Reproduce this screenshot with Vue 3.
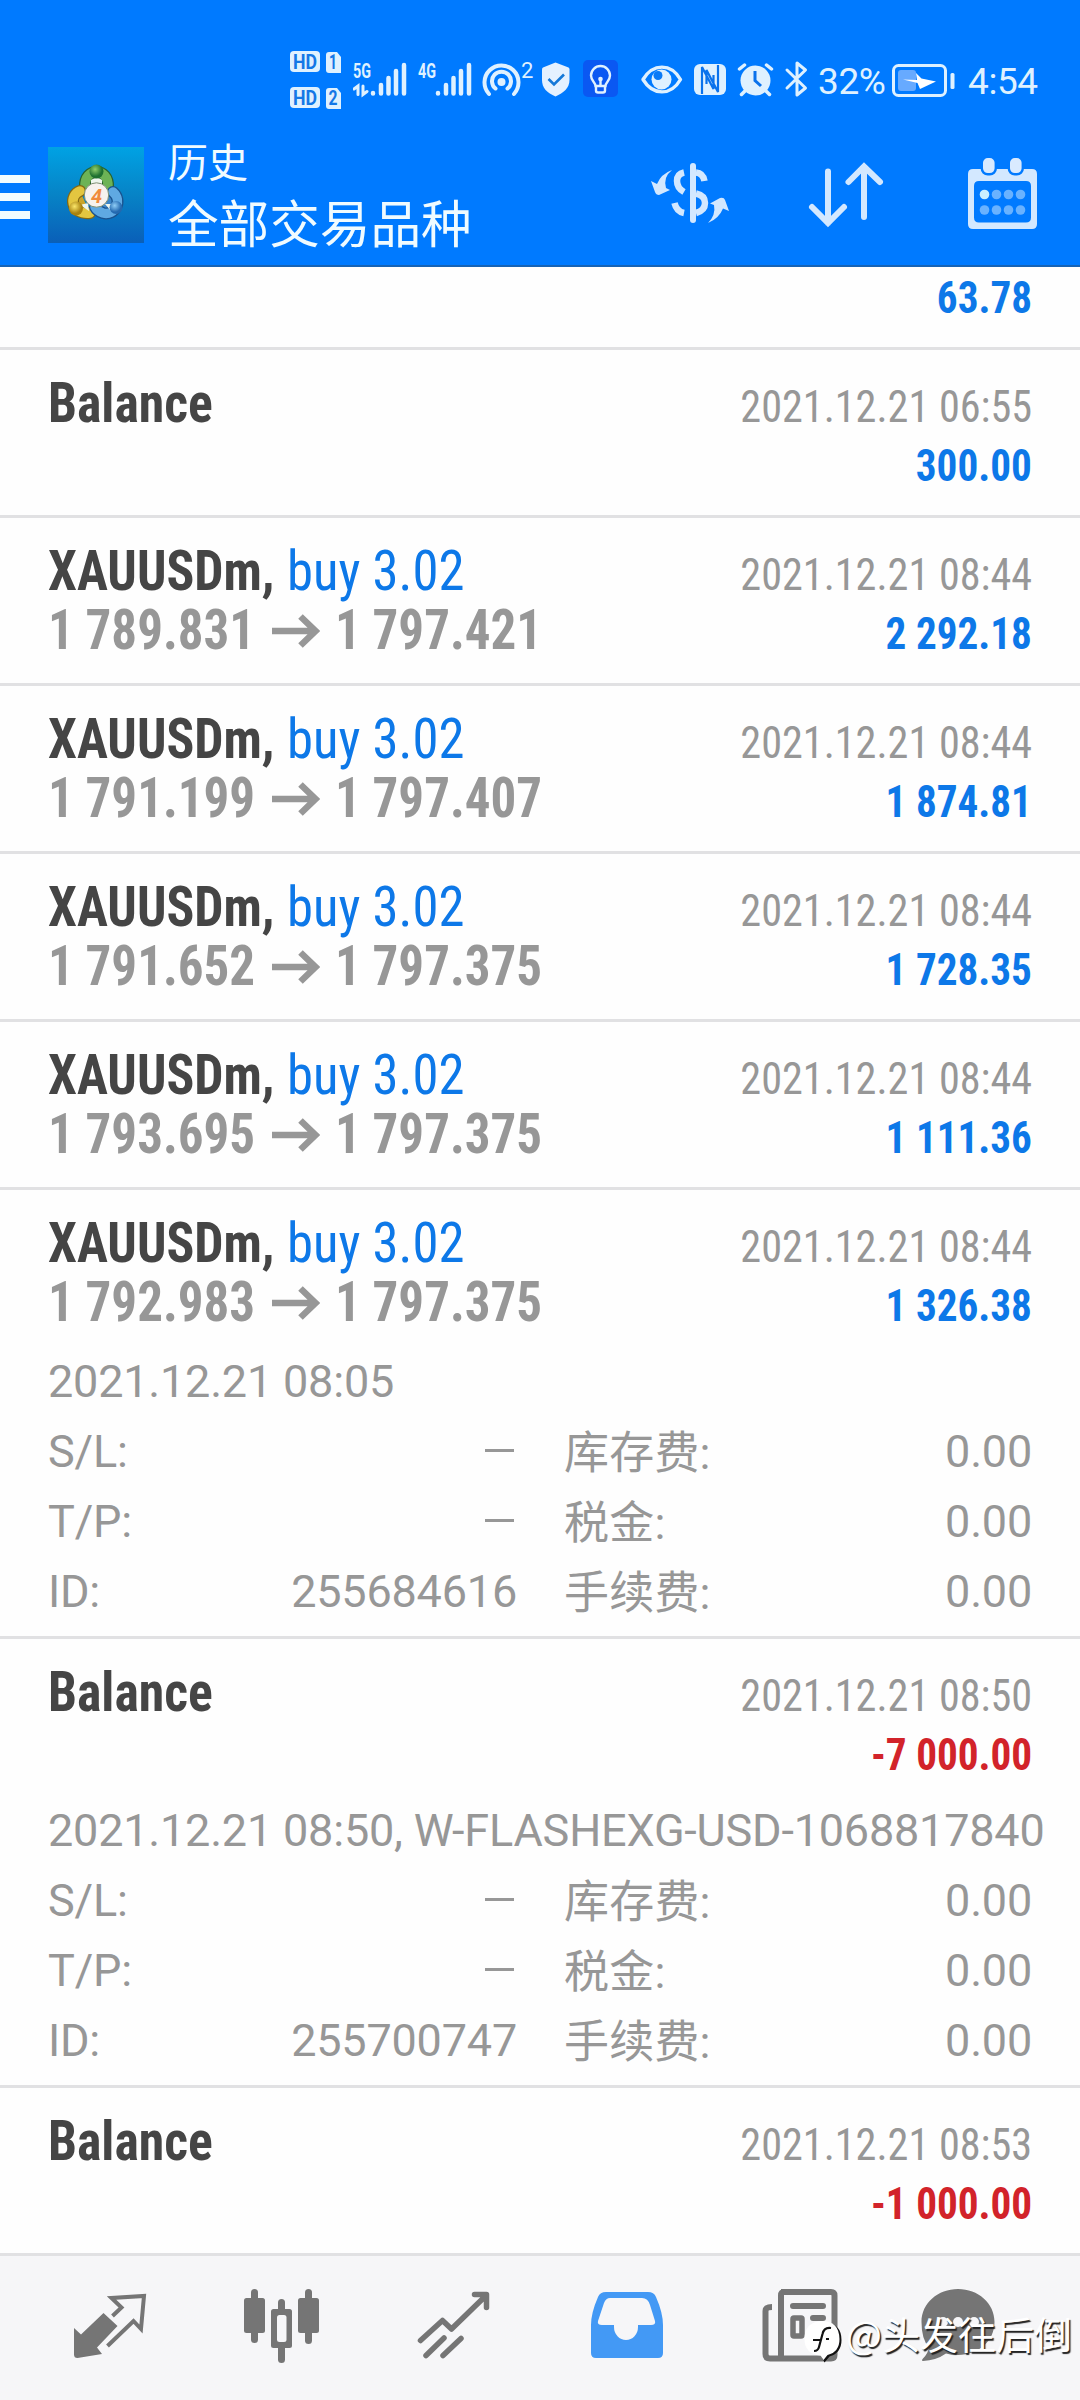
<script setup>
const deal = (from, to, profit, detail) => ({
  name: 'XAUUSDm,', side: 'buy 3.02', from, to, time: '2021.12.21 08:44', profit, detail
})

const rows = [
  { name: 'Balance', time: '2021.12.21 06:55', profit: '300.00' },
  deal('1 789.831', '1 797.421', '2 292.18'),
  deal('1 791.199', '1 797.407', '1 874.81'),
  deal('1 791.652', '1 797.375', '1 728.35'),
  deal('1 793.695', '1 797.375', '1 111.36'),
  deal('1 792.983', '1 797.375', '1 326.38', { note: '2021.12.21 08:05', id: '255684616' }),
  {
    name: 'Balance', time: '2021.12.21 08:50', profit: '-7 000.00', loss: true,
    detail: { note: '2021.12.21 08:50, W-FLASHEXG-USD-1068817840', id: '255700747' }
  },
  { name: 'Balance', time: '2021.12.21 08:53', profit: '-1 000.00', loss: true }
]
</script>

<template>
  <div class="screen">
    <header class="top">
      <div class="status">
        <svg width="63" height="64" viewBox="290 48 63 64">
          <g fill="#dff1ff">
            <rect x="290" y="51" width="30" height="21" rx="4" />
            <path d="M329 52h8l4 5v16q0 0-3 0h-9q-3 0-3-3V55q0-3 3-3z" />
            <rect x="290" y="87" width="30" height="21" rx="4" />
            <path d="M329 88h8l4 5v16q0 0-3 0h-9q-3 0-3-3V91q0-3 3-3z" />
          </g>
          <g class="badge" fill="#1478e6">
            <text x="293" y="68.500" textLength="24" lengthAdjust="spacingAndGlyphs">HD</text>
            <text x="329" y="69" textLength="8" lengthAdjust="spacingAndGlyphs">1</text>
            <text x="293" y="104.500" textLength="24" lengthAdjust="spacingAndGlyphs">HD</text>
            <text x="328.500" y="105" textLength="9" lengthAdjust="spacingAndGlyphs">2</text>
          </g>
        </svg>
        <svg width="64" height="64" viewBox="353 48 64 64">
          <text class="net" x="353" y="77.500" textLength="18" lengthAdjust="spacingAndGlyphs">5G</text>
          <g stroke="#dff1ff" stroke-width="4.500" stroke-linecap="round" fill="none">
            <path d="M373 93v.5M381 85v8.500M388.500 78v15.500M396 71v22.500M404 65v28.500" />
            <path stroke-width="3" d="M354 89l4-3v8.500M363 86v8.500l4-3" />
          </g>
        </svg>
        <svg width="65" height="64" viewBox="417 48 65 64">
          <text class="net" x="418" y="77.500" textLength="18" lengthAdjust="spacingAndGlyphs">4G</text>
          <path stroke="#dff1ff" stroke-width="4.500" stroke-linecap="round" d="M438 93v.5M446 85v8.500M453.500 78v15.500M461 71v22.500M469 65v28.500" />
        </svg>
        <svg width="59" height="64" viewBox="482 48 59 64">
          <g fill="none" stroke="#dff1ff" stroke-width="4" stroke-linecap="round">
            <path d="M489 94a17 17 0 1 1 25 0" />
            <path d="M495.500 88.500a9.500 9.500 0 1 1 12 0" />
          </g>
          <circle cx="501.500" cy="82" r="4" fill="#dff1ff" />
          <text class="thin" x="521" y="78" font-size="22">2</text>
        </svg>
        <svg width="42" height="64" viewBox="541 48 42 64">
          <path fill="#e4f1ff" d="M555.500 62.500l13 5q1 .5 1 2V80c0 8-6 13-14 16.500C547 93 542 88 542 80V69.500q0-1.500 1-2z" />
          <path fill="none" stroke="#1478d8" stroke-width="2.600" d="M548.500 79l5.500 5.500 10-10" />
        </svg>
        <svg width="58" height="64" viewBox="583 48 58 64">
          <rect x="583" y="60" width="35" height="37" rx="5" fill="#0a58f2" />
          <g fill="none" stroke="#dff1ff" stroke-width="2.400" stroke-linecap="round">
            <path d="M595.500 86c0-4-4.500-5-4.500-10.500a9.500 9.500 0 0 1 19 0c0 5.500-4.500 6.500-4.500 10.500zM596 87.500v3q0 2 2 2h5q2 0 2-2v-3M600.500 79v6" />
          </g>
          <circle cx="600.500" cy="79" r="2.300" fill="#dff1ff" />
        </svg>
        <svg width="53" height="64" viewBox="641 48 53 64">
          <path fill="none" stroke="#dff1ff" stroke-width="3.400" stroke-linejoin="round" d="M643 79.500C653 63 671 63 680.500 79.500 671 96 653 96 643 79.500z" />
          <circle cx="661.500" cy="79.500" r="10" fill="#dff1ff" />
          <circle cx="658" cy="75.500" r="4.500" fill="#0a7af6" />
        </svg>
        <svg width="43" height="64" viewBox="694 48 43 64">
          <rect x="694" y="64" width="32" height="31" rx="6" fill="#dff1ff" />
          <path fill="none" stroke="#0a72ec" stroke-width="2.200" d="M702 94V67l11.500 22V75M706.500 84v-14l11.500 22V65" />
        </svg>
        <svg width="47" height="64" viewBox="737 48 47 64">
          <circle cx="755.500" cy="80.500" r="15" fill="#dff1ff" />
          <path stroke="#dff1ff" stroke-width="3.500" stroke-linecap="round" fill="none" d="M739.500 69l5-4M766.500 65l5 4M745 91l-3.500 3.500M766 91l3.500 3.500" />
          <path fill="none" stroke="#0a72ec" stroke-width="3" d="M755 71v9.500l6 5.500" />
        </svg>
        <svg width="34" height="64" viewBox="784 48 34 64">
          <path fill="none" stroke="#dff1ff" stroke-width="3" stroke-linejoin="round" stroke-linecap="round" d="M787 70l18.500 18-8.500 7V63l8.500 7L787 88" />
        </svg>
        <span class="pct">32%</span>
        <svg width="76" height="64" viewBox="892 48 76 64">
          <rect x="893.500" y="65.500" width="52" height="30" rx="5" fill="none" stroke="#dff1ff" stroke-width="3" />
          <rect x="898" y="70" width="18" height="21" rx="3" fill="#67aaff" />
          <path fill="#fff" d="M916 73l5.500 5.500L936 81.500l-16 7.500-2.500-6L903 79.500l14 .5z" />
          <rect x="950.500" y="73" width="4" height="16" rx="1.500" fill="#dff1ff" />
        </svg>
        <span class="clock">4:54</span>
      </div>

      <div class="bar">
        <svg class="menu" width="48" height="96" viewBox="0 147 48 96">
          <path fill="#f2fcff" d="M0 175h30v8H0zM0 193h30v8H0zM0 211h30v8H0z" />
        </svg>
        <svg width="96" height="96" viewBox="0 0 96 96">
          <defs>
            <linearGradient id="tile" x1="0" y1="0" x2="0" y2="1">
              <stop offset="0" stop-color="#00a2e4" /><stop offset=".5" stop-color="#0783c6" /><stop offset="1" stop-color="#0a5fb8" />
            </linearGradient>
            <radialGradient id="green" cx=".4" cy=".35"><stop offset="0" stop-color="#8fce6c" /><stop offset="1" stop-color="#1f7030" /></radialGradient>
            <radialGradient id="gold" cx=".4" cy=".35"><stop offset="0" stop-color="#fbe76a" /><stop offset="1" stop-color="#a88210" /></radialGradient>
            <radialGradient id="blue" cx=".4" cy=".35"><stop offset="0" stop-color="#8fcdf6" /><stop offset="1" stop-color="#2369b0" /></radialGradient>
          </defs>
          <rect width="96" height="96" fill="url(#tile)" />
          <g fill="none" stroke-linecap="round">
            <path stroke="#28622e" fill="#3f8a3c" stroke-width="12" d="M37 40c-1-20 24-20 23 0" />
            <path stroke="#6db356" stroke-width="9.500" d="M37 40c-1-20 24-20 23 0" />
            <path stroke="#846812" fill="#c9a52a" stroke-width="12" d="M32 44c-11 4-10 24 10 22" />
            <path stroke="#e3c640" stroke-width="9.500" d="M32 44c-11 4-10 24 10 22" />
            <path stroke="#19528e" fill="#3b86c8" stroke-width="12" d="M65 45c10 9 2 24-10 21q-6-2-8-6" />
            <path stroke="#5fa9e2" stroke-width="9.500" d="M65 45c10 9 2 24-10 21q-6-2-8-6" />
          </g>
          <path fill="#eef6ee" d="M43 33q6-4 11 0v6H43zM32 58l8-2 1 8zM57 57l8 0-2 7z" />
          <circle cx="48.500" cy="24.500" r="7" fill="url(#green)" />
          <circle cx="28" cy="61.500" r="7" fill="url(#gold)" />
          <circle cx="68" cy="60.500" r="6.500" fill="url(#blue)" />
          <circle cx="48.500" cy="48" r="12.200" fill="#f7f2ee" stroke="#7e8f74" />
          <text x="43" y="55.500" font-size="20" font-weight="700" font-style="italic" fill="#f08b3c">4</text>
        </svg>
        <div class="titles">
          <div class="small">历史</div>
          <div class="big">全部交易品种</div>
        </div>
        <svg class="tools" width="460" height="110" viewBox="620 140 460 110">
          <g fill="none" stroke="#d3e8ff" stroke-width="6" stroke-linecap="round">
            <path d="M693 166v54" />
            <path stroke-width="6.500" stroke-linecap="butt" d="M684 172.500q-7 1.500-7 8.500t7 11M696 172.500q7 .5 8.500 8.500M674.500 203q2 8.500 9.500 10M696 193.500q9 2 9 9.500t-9 10" />
            <path d="M828 171.500v51.500M812 207l16 16 16-16M864 217v-49M848.500 182l15.500-15.500L880 182" />
          </g>
          <g fill="#d3e8ff">
            <path d="M672 170q-9 7-6 18l4 2-11 5q-3 0-4-3l-4-11 6 3q4-10 15-14z" />
            <path d="M708 223q8-8 6-18l-4-1.500 10-5.500q4-1 5 2l4 11-6-2.500q-4 10-15 14.500z" />
            <path fill-rule="evenodd" d="M973 169h59q5 0 5 5v50q0 5-5 5h-59q-5 0-5-5v-50q0-5 5-5zm6 12q-5 0-5 5v31.500q0 5 5 5h47q5 0 5-5V186q0-5-5-5z" />
          </g>
          <g fill="#d9eaff" stroke="#007aff" stroke-width="2.400">
            <rect x="981.800" y="156.800" width="14" height="17.500" rx="6" />
            <rect x="1008.800" y="156.800" width="14" height="17.500" rx="6" />
          </g>
          <g fill="#69b2ff">
            <circle cx="984.500" cy="194.500" r="4.800" fill="#c9efff" />
            <circle cx="996.500" cy="194.500" r="4.800" /><circle cx="1008.500" cy="194.500" r="4.800" /><circle cx="1020.500" cy="194.500" r="4.800" />
            <circle cx="984.500" cy="210" r="4.800" /><circle cx="996.500" cy="210" r="4.800" /><circle cx="1008.500" cy="210" r="4.800" /><circle cx="1020.500" cy="210" r="4.800" />
          </g>
        </svg>
      </div>
    </header>

    <main>
      <div class="cut"><span class="cond profit">63.78</span></div>
      <section v-for="(r, i) in rows" :key="i" class="row" :class="{ open: r.detail }">
        <div class="head">
          <div class="left">
            <div class="line"><b class="cond name">{{ r.name }}</b><span v-if="r.side" class="cond side">{{ r.side }}</span></div>
            <div v-if="r.from" class="line prices">
              <b class="cond">{{ r.from }}</b>
              <svg width="48" height="34" viewBox="0 0 48 34"><path fill="none" stroke="#979797" stroke-width="6.500" d="M0 17h44M28.500 2.500L43.500 17 28.500 31.500" /></svg>
              <b class="cond">{{ r.to }}</b>
            </div>
          </div>
          <div class="right">
            <span class="cond time">{{ r.time }}</span>
            <span class="cond profit" :class="{ loss: r.loss }">{{ r.profit }}</span>
          </div>
        </div>
        <div v-if="r.detail" class="detail">
          <div class="note">{{ r.detail.note }}</div>
          <div class="pair"><span>S/L:</span><i class="dash"></i><span class="fee">库存费:</span><span>0.00</span></div>
          <div class="pair"><span>T/P:</span><i class="dash"></i><span class="fee">税金:</span><span>0.00</span></div>
          <div class="pair"><span>ID:</span><span>{{ r.detail.id }}</span><span class="fee">手续费:</span><span>0.00</span></div>
        </div>
      </section>
    </main>

    <nav class="tabs">
      <svg width="172" height="144" viewBox="24 2256 172 144">
        <path fill="#757575" d="M103.500 2313l14 13-20.500 21.500 5 6.500-24.500 4q-3.500 0-3.500-3.500V2328l7 6.500z" />
        <path fill="none" stroke="#757575" stroke-width="4" d="M112.500 2316l9-8.500-10-9.500 32.500-2-3 33-7.500-8-26 25" />
      </svg>
      <svg width="172" height="144" viewBox="196 2256 172 144">
        <g fill="#757575">
          <rect x="244" y="2298" width="21" height="35" rx="2.500" /><rect x="251" y="2289" width="7" height="54" rx="3.500" />
          <rect x="298" y="2298" width="21" height="35" rx="2.500" /><rect x="305" y="2289" width="7" height="55" rx="3.500" />
          <rect x="271" y="2309" width="21" height="39" rx="2.500" /><rect x="278" y="2299" width="7" height="64" rx="3.500" />
        </g>
        <rect x="277" y="2315" width="9.500" height="27" rx="2.500" fill="#f6f6f8" />
      </svg>
      <svg width="172" height="144" viewBox="368 2256 172 144">
        <g fill="none" stroke="#757575" stroke-width="5.500" stroke-linecap="round" stroke-linejoin="round">
          <path d="M420.500 2340.500l22-20 9 8.500 33-32M474.500 2294.500h12v13M426 2355.500l18-17.500M443 2355.500l18-17" />
        </g>
      </svg>
      <svg width="172" height="144" viewBox="540 2256 172 144">
        <path fill="#4399f5" fill-rule="evenodd" d="M606 2292h42q6 0 8 5 7 16 7 28v28q0 5-5 5h-62q-5 0-5-5v-28q0-12 7-28 2-5 8-5zm4 6q-4 0-6 5l-6 18q-1 4 4 4h12v2a12 13 0 0 0 24 0v-2h13q5 0 4-4l-5-16q-2-7-8-7z" />
      </svg>
      <svg width="172" height="144" viewBox="712 2256 172 144">
        <g fill="none" stroke="#757575" stroke-width="6" stroke-linejoin="round">
          <path d="M781 2292h50q3.500 0 3.500 3.500V2355q0 3.500-3.500 3.500h-61q-4.500 0-4.500-4.500v-43q0-4 6.500-4v0M781 2357v-61.500q0-3.500 3-3.500" />
          <path stroke-linecap="round" d="M793 2306h30M813 2318h10M813 2330h10M813 2342h10" />
          <rect x="793" y="2318" width="9" height="18" stroke-width="5.500" rx="1" />
        </g>
      </svg>
      <svg width="196" height="144" viewBox="884 2256 196 144">
        <path fill="#757575" d="M958 2289c20 0 36.500 14 36.500 33s-16 33-36.500 33q-7 0-12-1.500-10 7-23 7.500-2-.5 0-2.500 5-5 6-11-7.500-8-7.500-25.500c0-19 16.500-33 36.500-33z" />
        <g fill="#f6f6f8"><circle cx="943" cy="2322" r="5" /><circle cx="958" cy="2322" r="5" /><circle cx="974" cy="2322" r="5" /></g>
      </svg>
    </nav>

    <div class="mark">
      <svg width="42" height="46" viewBox="802 2318 42 46">
        <path fill="#111" d="M824 2322.500h3q14.500 2 14.500 17.500 0 13-12 16.500l-5 6-3-6z" />
        <path fill="#fff" d="M822 2321q17 0 17.500 18 0 13-12 16l-4 5-3-4.500q-16-1.500-16-16.500 0-17 17.500-18z" />
        <path fill="none" stroke="#111" stroke-width="2.200" d="M831 2328q-7-1-8.500 6l-3.500 13q-1 4-5 4M813 2340h7m6-1h3" />
      </svg>
      <span>@头发往后倒</span>
    </div>
  </div>
</template>

<style>
body { background: #fefefe; }
</style>

<style scoped>
.screen {
  width: 1080px; height: 2400px; position: relative; overflow: hidden;
  display: flex; flex-direction: column; background: #fefefe;
  font-family: Roboto, "Noto Sans CJK SC", sans-serif;
}
svg { display: block; flex: none; }
.top { height: 265px; border-bottom: 2px solid #1763b5; background: #007aff; flex: none; }
.status { height: 112px; padding: 48px 0 0 290px; box-sizing: border-box; display: flex; color: #dff1ff; }
.badge text { font: 700 20px Roboto, sans-serif; }
.net { font: 700 21px Roboto, sans-serif; fill: #dff1ff; }
.thin { fill: #dff1ff; }
.pct, .clock { font-size: 37px; line-height: 67px; flex: none; font-weight: 400; letter-spacing: -0.4px; }
.pct { width: 74px; }
.clock { width: 78px; }
.bar { display: flex; height: 153px; padding-top: 35px; box-sizing: border-box; }
.titles { margin-left: 24px; margin-top: -8px; color: #f0fbff; width: 452px; }
.small { font-size: 40px; line-height: 50px; }
.big { font-size: 50.600px; line-height: 74px; white-space: nowrap; }
.tools { margin-top: -7px; }

main { flex: 1; min-height: 0; }
.cut { height: 80px; display: flex; justify-content: flex-end; padding: 1px 48px 0 0; box-sizing: border-box; }
.row { border-top: 3px solid #e1e1e3; height: 165px; }
.row.open { height: 446px; }
.head { height: 157px; display: flex; justify-content: space-between; padding: 0 48px; }
.left { padding-top: 24px; }
.line { height: 59px; display: flex; font-size: 55px; line-height: 59px; white-space: pre; color: #454545; }
/* The condensed face is narrowed a little further than its own width axis goes. */
.cond { font-family: "Roboto Condensed", Roboto, sans-serif; font-stretch: 75%; white-space: pre; transform-origin: 0 50%; }
.name { transform: scaleX(.94); }
.side { color: #0d78e8; margin-left: -2px; transform: scaleX(.958); }
.prices { color: #979797; align-items: center; }
.prices .cond { transform: scaleX(.928); }
.prices svg { margin: 0 15px 0 1px; }
.right { padding-top: 27px; display: flex; flex-direction: column; align-items: flex-end; }
.time, .profit { font-size: 45px; line-height: 59px; transform-origin: 100% 50%; }
.time { color: #979797; transform: scaleX(.938); }
.profit { color: #0d78e8; font-weight: 700; transform: scaleX(.915); }
.loss { color: #d2232a; }
.detail { padding: 0 48px; color: #979797; font-size: 45px; line-height: 70px; white-space: nowrap; letter-spacing: -0.200px; }
.pair { height: 70px; display: grid; grid-template-columns: 100px 369px 300px 1fr; }
.pair > :nth-child(even) { justify-self: end; }
.fee { padding: 2px 0 0 47px; letter-spacing: 0.200px; }
.dash { width: 29px; height: 3px; background: #979797; margin: 32px 3px 0 0; }

.tabs { height: 144px; flex: none; border-top: 3px solid #e1e1e3; background: #f6f6f8; display: flex; padding-left: 24px; }
.mark { position: absolute; left: 802px; top: 2318px; display: flex; color: #fff; }
.mark span {
  margin: -5px 0 0 2px; font: 38px/40px "Noto Sans CJK SC", sans-serif; white-space: nowrap;
  text-shadow: 1.5px 1.5px 1px #222;
}
</style>
